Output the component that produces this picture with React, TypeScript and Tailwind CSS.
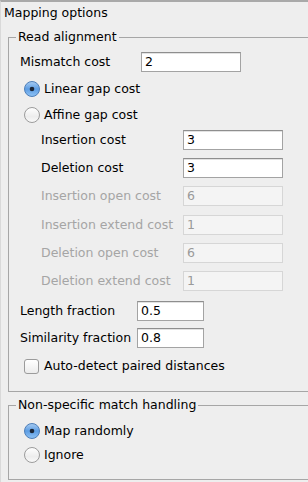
import React from 'react';

const font = { fontFamily: '"DejaVu Sans", "Liberation Sans", sans-serif' };

const Radio: React.FC<{ checked?: boolean }> = ({ checked }) => (
  <svg width="16" height="16" viewBox="0 0 16 16" className="shrink-0">
    <defs>
      <linearGradient id="rOn" x1="0" y1="0" x2="0" y2="1">
        <stop offset="0" stopColor="#a9cdf2" />
        <stop offset="0.5" stopColor="#5d9de3" />
        <stop offset="1" stopColor="#8fc3f5" />
      </linearGradient>
      <linearGradient id="rOff" x1="0" y1="0" x2="0" y2="1">
        <stop offset="0" stopColor="#ffffff" />
        <stop offset="0.6" stopColor="#ededed" />
        <stop offset="1" stopColor="#fafafa" />
      </linearGradient>
    </defs>
    {checked ? (
      <>
        <circle cx="8" cy="8" r="7.5" fill="url(#rOn)" stroke="#4f7fb8" strokeWidth="1" />
        <circle cx="8" cy="8" r="2.3" fill="#1c2636" />
      </>
    ) : (
      <circle cx="8" cy="8" r="7.5" fill="url(#rOff)" stroke="#9b9b9b" strokeWidth="1" />
    )}
  </svg>
);

const Field: React.FC<{ value: string; w: string; disabled?: boolean }> = ({ value, w, disabled }) => (
  <div
    className={`${w} h-[20px] flex items-center pl-[3px] border ${
      disabled
        ? 'bg-[#f4f4f4] border-[#d6d6d6] text-[#9a9a9a]'
        : 'bg-white border-[#a3a3a3] border-t-[#8e8e8e] text-black shadow-[inset_0_1px_0_#e2e2e2]'
    }`}
  >
    {value}
  </div>
);

const Row: React.FC<{ label: string; value: string; labelW: string; inputW: string; disabled?: boolean; className?: string }> = ({
  label,
  value,
  labelW,
  inputW,
  disabled,
  className = '',
}) => (
  <div className={`flex items-center h-[20px] ${className}`}>
    <span className={`${labelW} shrink-0 whitespace-nowrap ${disabled ? 'text-[#a5a5a5]' : 'text-black'}`}>{label}</span>
    <Field value={value} w={inputW} disabled={disabled} />
  </div>
);

export default function App() {
  return (
    <div
      className="w-[308px] h-[482px] bg-[#eeeeee] overflow-hidden border-t-2 border-t-[#a9a9a9] border-l border-l-[#d9d9d9] text-[12.5px] text-black"
      style={font}
    >
      <div className="h-[22px] flex items-center pl-[3px]">Mapping options</div>

      <fieldset className="ml-[7px] mt-[5px] w-[320px] h-[363px] border border-[#a6a6a6] pl-[11px]">
        <legend className="ml-[-4px] px-[2px] h-[16px] leading-[16px]">Read alignment</legend>

        <Row className="mt-[7px]" label="Mismatch cost" value="2" labelW="w-[121px]" inputW="w-[100px]" />

        <div className="flex items-center h-[20px] mt-[7px] pl-[4px] gap-[4px]">
          <Radio checked />
          <span>Linear gap cost</span>
        </div>
        <div className="flex items-center h-[20px] mt-[6px] pl-[4px] gap-[4px]">
          <Radio />
          <span>Affine gap cost</span>
        </div>

        <div className="pl-[21px]">
          <Row className="mt-[5px]" label="Insertion cost" value="3" labelW="w-[142px]" inputW="w-[100px]" />
          <Row className="mt-[8px]" label="Deletion cost" value="3" labelW="w-[142px]" inputW="w-[100px]" />
          <Row className="mt-[8px]" label="Insertion open cost" value="6" labelW="w-[142px]" inputW="w-[100px]" disabled />
          <Row className="mt-[9px]" label="Insertion extend cost" value="1" labelW="w-[142px]" inputW="w-[100px]" disabled />
          <Row className="mt-[8px]" label="Deletion open cost" value="6" labelW="w-[142px]" inputW="w-[100px]" disabled />
          <Row className="mt-[8px]" label="Deletion extend cost" value="1" labelW="w-[142px]" inputW="w-[100px]" disabled />
        </div>

        <Row className="mt-[10px]" label="Length fraction" value="0.5" labelW="w-[117px]" inputW="w-[67px]" />
        <Row className="mt-[7px]" label="Similarity fraction" value="0.8" labelW="w-[117px]" inputW="w-[67px]" />

        <div className="flex items-center h-[20px] mt-[8px] pl-[4px] gap-[5px]">
          <span className="w-[15px] h-[15px] rounded-[3px] border border-[#9b9b9b] bg-gradient-to-b from-white to-[#ececec] shrink-0" />
          <span>Auto-detect paired distances</span>
        </div>
      </fieldset>

      <fieldset className="ml-[7px] mt-[5px] w-[320px] h-[83px] border border-[#a6a6a6] pl-[11px]">
        <legend className="ml-[-4px] px-[2px] h-[16px] leading-[16px]">Non-specific match handling</legend>
        <div className="flex items-center h-[20px] mt-[8px] pl-[4px] gap-[4px]">
          <Radio checked />
          <span>Map randomly</span>
        </div>
        <div className="flex items-center h-[20px] mt-[4px] pl-[4px] gap-[4px]">
          <Radio />
          <span>Ignore</span>
        </div>
      </fieldset>
    </div>
  );
}
